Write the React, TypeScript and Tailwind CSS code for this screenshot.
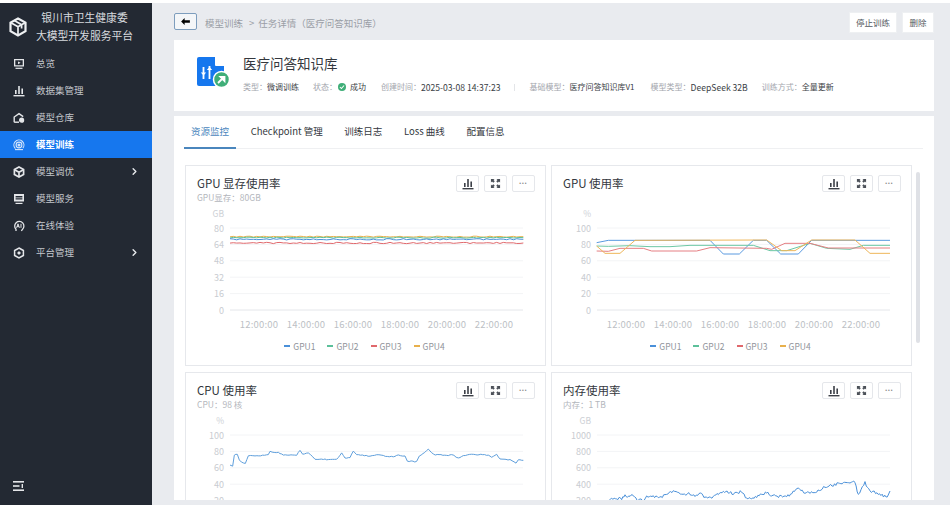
import { ChevronRight } from "lucide-react";

type Pt = [number, number];

const FONT = "font-['Noto_Sans_CJK_SC','Noto_Sans',sans-serif]";

// seeded noise so the picture is the same on every run
const rand = (seed: number) => {
  const v = Math.sin(seed * 127.1 + 311.7) * 43758.5453;
  return v - Math.floor(v);
};

const jitter = (pts: Pt[], amp: number, seed: number, step = 3): Pt[] => {
  const out: Pt[] = [];
  for (let i = 0; i < pts.length - 1; i++) {
    const [x0, y0] = pts[i];
    const [x1, y1] = pts[i + 1];
    const n = Math.max(1, Math.round((x1 - x0) / step));
    for (let k = 0; k < n; k++) {
      const t = k / n;
      out.push([x0 + (x1 - x0) * t, y0 + (y1 - y0) * t + (rand(seed + i * 31 + k) - 0.5) * amp]);
    }
  }
  out.push(pts[pts.length - 1]);
  return out;
};

// traces were read off the reference in 3x crops, so bring them to card coords
const scale = (pts: Pt[], dx: number, dy: number): Pt[] => pts.map(([x, y]) => [x / 3 - dx, y / 3 - dy]);

const flat = (y: number): Pt[] => [[150, y], [1030, y]];

const memSeries = [
  { color: "#e8b04c", pts: scale(jitter(flat(230), 3, 11, 10), 6, 6) },
  { color: "#5cc09a", pts: scale(jitter(flat(233), 3, 23, 10), 6, 6) },
  { color: "#4a90d9", pts: scale(jitter(flat(238), 4, 37, 10), 6, 6) },
  { color: "#e0686c", pts: scale(jitter(flat(249), 4, 41, 10), 6, 6) },
];

const gpuSeries = [
  { color: "#5a9ae0", pts: scale([[140, 248], [175, 241], [480, 241], [520, 282], [568, 282], [610, 241], [650, 241], [692, 282], [745, 282], [785, 241], [1020, 241]], 2, 6) },
  { color: "#6cc7a4", pts: scale([[140, 258], [175, 259], [240, 257], [300, 260], [360, 260], [420, 256], [610, 256], [660, 272], [710, 272], [780, 250], [830, 265], [900, 268], [940, 256], [1020, 256]], 2, 6) },
  { color: "#e57f83", pts: scale([[140, 273], [175, 274], [210, 265], [280, 265], [305, 273], [440, 273], [480, 263], [650, 265], [665, 268], [705, 250], [780, 250], [835, 264], [1020, 264]], 2, 6) },
  { color: "#eeb65a", pts: scale([[140, 258], [165, 280], [210, 280], [255, 241], [650, 240], [695, 272], [735, 272], [785, 240], [915, 240], [960, 280], [1020, 280]], 2, 6) },
];

const cpuTrace: Pt[] = [[150, 300], [158, 302], [163, 270], [172, 268], [178, 285], [190, 295], [196, 295], [205, 272], [225, 274], [265, 270], [270, 260], [295, 262], [310, 270], [350, 270], [360, 255], [368, 267], [385, 263], [405, 283], [430, 282], [445, 285], [470, 283], [485, 265], [495, 280], [510, 278], [520, 257], [530, 268], [570, 274], [590, 268], [610, 272], [640, 276], [655, 270], [675, 274], [682, 288], [710, 290], [718, 274], [745, 253], [760, 268], [800, 272], [815, 268], [835, 280], [850, 271], [880, 268], [925, 270], [935, 278], [950, 268], [960, 282], [990, 284], [1008, 293], [1015, 285], [1030, 286]];

const ramTrace: Pt[] = [[150, 430], [185, 403], [200, 400], [215, 402], [225, 392], [240, 395], [250, 390], [262, 405], [285, 405], [290, 395], [310, 392], [325, 400], [345, 390], [370, 380], [395, 388], [420, 386], [435, 395], [455, 385], [465, 400], [490, 395], [520, 380], [550, 385], [575, 380], [590, 400], [620, 395], [650, 382], [665, 393], [710, 395], [745, 372], [765, 385], [800, 380], [825, 365], [850, 360], [880, 352], [900, 355], [915, 350], [925, 392], [945, 353], [960, 378], [985, 385], [1012, 398], [1020, 378]];

const TIMES = ["12:00:00", "14:00:00", "16:00:00", "18:00:00", "20:00:00", "22:00:00"];

interface Series {
  color: string;
  pts: Pt[];
}

const Chart = ({ unit, ticks, series, plotLeft, times }: { unit: string; ticks: string[]; series: Series[]; plotLeft: number; times: boolean }) => {
  const top = 62;
  const gap = 82 / 5;
  return (
    <svg width="361" height="165" className="block" style={{ fontFamily: "'Noto Sans CJK SC', 'Noto Sans', sans-serif" }}>
      <text x={plotLeft - 7} y={51} fontSize="8.5" fill="#cdd0d5" textAnchor="end">{unit}</text>
      {ticks.map((t, i) => (
        <g key={t}>
          <line x1={plotLeft - 1} x2={plotLeft + 292} y1={top + gap * i} y2={top + gap * i} stroke={i === 5 ? "#e4e6ea" : "#f3f4f6"} />
          <text x={plotLeft - 7} y={top + gap * i + 3.5} fontSize="9" fill="#c9ccd1" textAnchor="end">{t}</text>
        </g>
      ))}
      {times && TIMES.map((t, i) => (
        <text key={t} x={plotLeft + 28 + i * 47} y={162} fontSize="9.5" fill="#bcbfc5" textAnchor="middle" letterSpacing="0.2">{t}</text>
      ))}
      {series.map((s) => (
        <polyline key={s.color} points={s.pts.map((p) => p.join(",")).join(" ")} fill="none" stroke={s.color} strokeWidth="1" strokeLinejoin="round" />
      ))}
    </svg>
  );
};

const LEGEND = [
  { name: "GPU1", color: "bg-[#4a90d9]" },
  { name: "GPU2", color: "bg-[#5cc09a]" },
  { name: "GPU3", color: "bg-[#e0686c]" },
  { name: "GPU4", color: "bg-[#e8b04c]" },
];

const BarsIcon = ({ className }: { className: string }) => (
  <svg viewBox="0 0 12 12" className={className} fill="currentColor">
    <rect x="0.5" y="10" width="11" height="1.4" />
    <rect x="2" y="5" width="1.6" height="4" />
    <rect x="5.2" y="1" width="1.6" height="8" />
    <rect x="8.4" y="3.5" width="1.6" height="5.5" />
  </svg>
);

const ExpandIcon = () => (
  <svg viewBox="0 0 12 12" className="w-[11px] h-[11px] text-[#4b5058]" fill="currentColor">
    <path d="M1 1h4L3.8 2.2 5.2 3.6 3.6 5.2 2.2 3.8 1 5z" />
    <path d="M11 1H7l1.2 1.2L6.8 3.6l1.6 1.6 1.4-1.4L11 5z" />
    <path d="M1 11h4L3.8 9.8l1.4-1.4-1.6-1.6-1.4 1.4L1 7z" />
    <path d="M11 11H7l1.2-1.2-1.4-1.4 1.6-1.6 1.4 1.4L11 7z" />
  </svg>
);

const CardButton = ({ children }: { children: React.ReactNode }) => (
  <button className="w-[23px] h-[17px] border border-[#e5e7eb] rounded-[2px] bg-white flex items-center justify-center">
    {children}
  </button>
);

const ChartCard = ({ title, sub, unit, ticks, series, plotLeft, legend }: {
  title: string;
  sub?: string;
  unit: string;
  ticks: string[];
  series: Series[];
  plotLeft: number;
  legend?: boolean;
}) => (
  <div className="h-[201px] border border-[#e6e8ec] bg-white relative overflow-hidden">
    <div className="absolute top-[9px] right-[10px] flex gap-[5px]">
      <CardButton><BarsIcon className="w-[12px] h-[12px] text-[#3c4048]" /></CardButton>
      <CardButton><ExpandIcon /></CardButton>
      <CardButton><span className="font-['Liberation_Sans',sans-serif] text-[5px] tracking-[1px] leading-none text-[#888]">•••</span></CardButton>
    </div>
    <div className="h-[38px] -mb-[38px] px-[11px] pt-[9px]">
      <div className="text-[11.5px] leading-[16px] text-[#33373d]">{title}</div>
      {sub && <div className="text-[8.5px] leading-[12px] text-[#b3b6bc]">{sub}</div>}
    </div>
    <Chart unit={unit} ticks={ticks} series={series} plotLeft={plotLeft} times={!!legend} />
    {legend && (
      <div className="flex justify-center gap-[12px] mt-[9px] pr-[2px]">
        {LEGEND.map((l) => (
          <div key={l.name} className="flex items-center gap-[3px] text-[8.5px] leading-[12px] text-[#8f939a]">
            <span className={`w-[6px] h-[1.5px] ${l.color}`} />
            {l.name}
          </div>
        ))}
      </div>
    )}
  </div>
);

const MENU = [
  { label: "总览", icon: "overview" },
  { label: "数据集管理", icon: "data" },
  { label: "模型仓库", icon: "repo" },
  { label: "模型训练", icon: "train", active: true },
  { label: "模型调优", icon: "tune", arrow: true },
  { label: "模型服务", icon: "serve" },
  { label: "在线体验", icon: "try" },
  { label: "平台管理", icon: "admin", arrow: true },
];

const MenuIcon = ({ name }: { name: string }) => {
  const cls = "w-[12px] h-[12px]";
  if (name === "overview")
    return (
      <svg viewBox="0 0 12 12" className={cls} fill="currentColor">
        <path fillRule="evenodd" d="M1 1h10v7.5H1zM2.3 2.3v4.9h7.4V2.3z" />
        <path d="M5 3.4 7.6 4.8 5 6.2z" />
        <rect x="2.5" y="9.7" width="7" height="1.2" />
      </svg>
    );
  if (name === "data") return <BarsIcon className={cls} />;
  if (name === "repo")
    return (
      <svg viewBox="0 0 12 12" className={cls} fill="none" stroke="currentColor" strokeWidth="1.4">
        <path d="M1.2 10.2V5L6 1.6 10.2 4.6" />
        <path d="M1.2 10.2H6" />
        <circle cx="8.6" cy="8.2" r="1.9" fill="currentColor" />
      </svg>
    );
  if (name === "train")
    return (
      <svg viewBox="0 0 12 12" className={cls} fill="none" stroke="currentColor" strokeWidth="1.1">
        <path d="M2.4 9.6A5 5 0 1 1 9.8 9.2" />
        <circle cx="6" cy="6" r="2.9" />
        <circle cx="6" cy="6" r="1" fill="currentColor" />
        <path d="M2 10.6h8" />
      </svg>
    );
  if (name === "tune")
    return (
      <svg viewBox="0 0 12 12" className={cls} fill="none" stroke="currentColor" strokeWidth="1.7">
        <path d="M6 1 10.6 3.6V8.4L6 11 1.4 8.4V3.6z" />
        <path d="M1.6 3.8 6 6.2 10.4 3.8M6 6.2V11" />
      </svg>
    );
  if (name === "serve")
    return (
      <svg viewBox="0 0 12 12" className={cls} fill="currentColor">
        <path fillRule="evenodd" d="M1 1h10v7.6H1zM2.6 3v1.4h6.8V3zM2.6 5.2v1.4h6.8V5.2z" />
        <rect x="2.5" y="9.8" width="7" height="1.2" />
      </svg>
    );
  if (name === "try")
    return (
      <svg viewBox="0 0 12 12" className={cls} fill="none" stroke="currentColor" strokeWidth="1.3">
        <path d="M3 11V9.2A4.6 4.6 0 1 1 9.4 9.4L8.4 11" />
        <path d="M3.6 7.8 5 3.8 6.4 7.8M4.1 6.6H5.9M8 3.8V7.8" strokeWidth="1" />
      </svg>
    );
  return (
    <svg viewBox="0 0 12 12" className={cls} fill="none" stroke="currentColor" strokeWidth="1.5">
      <path d="M6 1 10.4 3.5V8.5L6 11 1.6 8.5V3.5z" />
      <circle cx="6" cy="6" r="1.3" fill="currentColor" strokeWidth="0.6" />
    </svg>
  );
};

const Sidebar = () => (
  <aside className="w-[152px] bg-[#232933] flex flex-col shrink-0">
    <div className="h-[47px] flex items-center pl-[9px]">
      <svg viewBox="0 0 18 20" className="w-[18px] h-[20px] text-[#eef0f2]" fill="none" stroke="currentColor" strokeWidth="2.2">
        <path d="M9 1.5 16.5 5.6V14.2L9 18.5 1.5 14.2V5.6z" />
        <path d="M2 5.8 9 9.8 16 5.8M9 9.8V18M5.4 3.6 12.6 7.8V11.5" strokeWidth="1.7" />
      </svg>
      <div className="flex-1 text-center text-[10.8px] leading-[17.5px] text-[#d7dade] pr-[10px]">
        <div>银川市卫生健康委</div>
        <div>大模型开发服务平台</div>
      </div>
    </div>
    <nav className="flex flex-col">
      {MENU.map((m) => (
        <div
          key={m.label}
          className={`h-[27px] flex items-center pl-[13px] pr-[12px] text-[9.5px] ${m.active ? "bg-[#1677ee] text-white font-bold" : "text-[#c3c7cd]"}`}
        >
          <span className={m.active ? "text-[#d6e6fb]" : "text-[#e4e6e9]"}>
            <MenuIcon name={m.icon} />
          </span>
          <span className="ml-[11px] flex-1">{m.label}</span>
          {m.arrow && <ChevronRight className="w-[11px] h-[11px] text-[#e8eaed]" strokeWidth={3} />}
        </div>
      ))}
    </nav>
    <div className="mt-auto pl-[13px] pb-[14px] text-[#e4e6e9]">
      <svg viewBox="0 0 11 10" className="w-[11px] h-[10px]" fill="currentColor">
        <rect width="11" height="1.6" />
        <rect y="4.2" width="6.5" height="1.6" />
        <rect y="8.4" width="11" height="1.6" />
        <rect x="8.6" y="3" width="1.4" height="4" />
      </svg>
    </div>
  </aside>
);

const DocIcon = () => (
  <svg viewBox="0 0 33 31" className="w-[33px] h-[31px]">
    <path d="M2 0H18L27 9V29H2A2 2 0 0 1 0 27V2A2 2 0 0 1 2 0Z" fill="#1677ee" />
    <path d="M19 0 27 8H19Z" fill="#fff" />
    <path d="M18.5 0V8.5H27" fill="none" stroke="#fff" strokeWidth="1" />
    <path d="M6.5 10V22M12.5 9V22" stroke="#fff" strokeWidth="1.8" />
    <path d="M3.8 15.5 6.5 18.5 9.2 15.5ZM9.8 13 12.5 10 15.2 13Z" fill="#fff" />
    <circle cx="24.5" cy="22.5" r="8" fill="#3fae78" stroke="#fff" strokeWidth="1.5" />
    <path d="M21 26 25 22M23.5 20H27.5V24Z" stroke="#fff" strokeWidth="1.8" fill="#fff" />
  </svg>
);

const Meta = ({ label, value, icon, wide }: { label: string; value: string; icon?: boolean; wide?: boolean }) => (
  <span className="flex items-center">
    <span className="text-[#a3a6ad]">{label}：</span>
    {icon && (
      <span className="w-[8px] h-[8px] rounded-full bg-[#3fae78] flex items-center justify-center ml-[1px] mr-[4px]">
        <svg viewBox="0 0 8 8" className="w-[6px] h-[6px]" fill="none" stroke="#fff" strokeWidth="1.4">
          <path d="M1.2 4 3.2 6 6.8 2" />
        </svg>
      </span>
    )}
    <span className={wide ? "text-[8.6px] text-[#3a3e45]" : "text-[#3a3e45]"}>{value}</span>
  </span>
);

const TABS = ["资源监控", "Checkpoint 管理", "训练日志", "Loss 曲线", "配置信息"];

export default function App() {
  return (
    <div className={`w-[950px] h-[510px] bg-white overflow-hidden pt-[3px] ${FONT}`}>
      <div className="flex h-[502px]">
        <Sidebar />
        <main className="flex-1 min-w-0 bg-[#e9ebef] pl-[22px] pr-[16px] pb-[5px] flex flex-col">
          <div className="h-[37px] flex items-start shrink-0">
            <button className="w-[23px] h-[17px] mt-[10px] border border-[#7d9dbd] rounded-[2px] bg-[#f4f6f8] flex items-center justify-center">
              <svg viewBox="0 0 10 8" className="w-[9px] h-[7px] text-black" fill="currentColor">
                <path d="M0 4 4 0V2.6H10V5.4H4V8Z" />
              </svg>
            </button>
            <div className="mt-[13px] ml-[8px] text-[9.5px] leading-[14px] text-[#9a9ea6] whitespace-nowrap">
              模型训练<span className="ml-[6px] mr-[4px]">&gt;</span>任务详情（医疗问答知识库）
            </div>
            <div className="ml-auto mt-[9px] flex gap-[5px]">
              <button className="w-[48px] h-[21px] bg-white border border-[#eef0f2] text-[8.5px] text-[#555a62]">停止训练</button>
              <button className="w-[32px] h-[21px] bg-white border border-[#eef0f2] text-[8.5px] text-[#555a62]">删除</button>
            </div>
          </div>

          <section className="h-[71px] bg-white flex items-start pl-[23px] shrink-0">
            <div className="mt-[17px]"><DocIcon /></div>
            <div className="ml-[13px] pt-[14px]">
              <h1 className="text-[13.5px] leading-[18px] text-[#33373d] font-normal">医疗问答知识库</h1>
              <div className="mt-[9px] flex items-center text-[8px] leading-[12px] whitespace-nowrap">
                <Meta label="类型" value="微调训练" />
                <span className="ml-[14px]"><Meta label="状态" value="成功" icon /></span>
                <span className="ml-[15px]"><Meta label="创建时间" value="2025-03-08 14:37:23" wide /></span>
                <span className="w-px h-[7px] bg-[#e3e5e8] mx-[14px]" />
                <Meta label="基础模型" value="医疗问答知识库V1" />
                <span className="ml-[16px]"><Meta label="模型类型" value="DeepSeek 32B" wide /></span>
                <span className="ml-[14px]"><Meta label="训练方式" value="全量更新" /></span>
              </div>
            </div>
          </section>

          <section className="mt-[5px] flex-1 min-h-0 bg-white overflow-hidden px-[11px]">
            <div className="h-[33px] flex border-b border-[#eff0f2] gap-[7.7px] -ml-px">
              {TABS.map((t, i) => (
                <div
                  key={t}
                  className={`px-[7px] h-[33px] leading-[30px] text-[9.5px] whitespace-nowrap border-b-2 ${i === 0 ? "border-[#4a86bd] text-[#4a86bd]" : "border-transparent text-[#33373d]"}`}
                >
                  {t}
                </div>
              ))}
            </div>
            <div className="flex pt-[16px]">
              <div className="grid grid-cols-[361px_361px] gap-x-[5px] gap-y-[6px]">
                <ChartCard title="GPU 显存使用率" sub="GPU显存：80GB" unit="GB" ticks={["80", "64", "48", "32", "16", "0"]} series={memSeries} plotLeft={45} legend />
                <ChartCard title="GPU 使用率" unit="%" ticks={["100", "80", "60", "40", "20", "0"]} series={gpuSeries} plotLeft={46} legend />
                <ChartCard title="CPU 使用率" sub="CPU：98 核" unit="%" ticks={["100", "80", "60", "40", "20"]} series={[{ color: "#5f9fdc", pts: scale(jitter(cpuTrace, 3, 5, 6), 6, 8) }]} plotLeft={45} />
                <ChartCard title="内存使用率" sub="内存：1 TB" unit="GB" ticks={["1000", "800", "600", "400", "200"]} series={[{ color: "#4a90d9", pts: scale(jitter(ramTrace, 8, 9, 4), 2, 8) }]} plotLeft={46} />
              </div>
              <div className="w-[4px] h-[171px] mt-[7px] ml-[4px] rounded-full bg-[#dfe1e6] shrink-0" />
            </div>
          </section>
        </main>
      </div>
    </div>
  );
}
